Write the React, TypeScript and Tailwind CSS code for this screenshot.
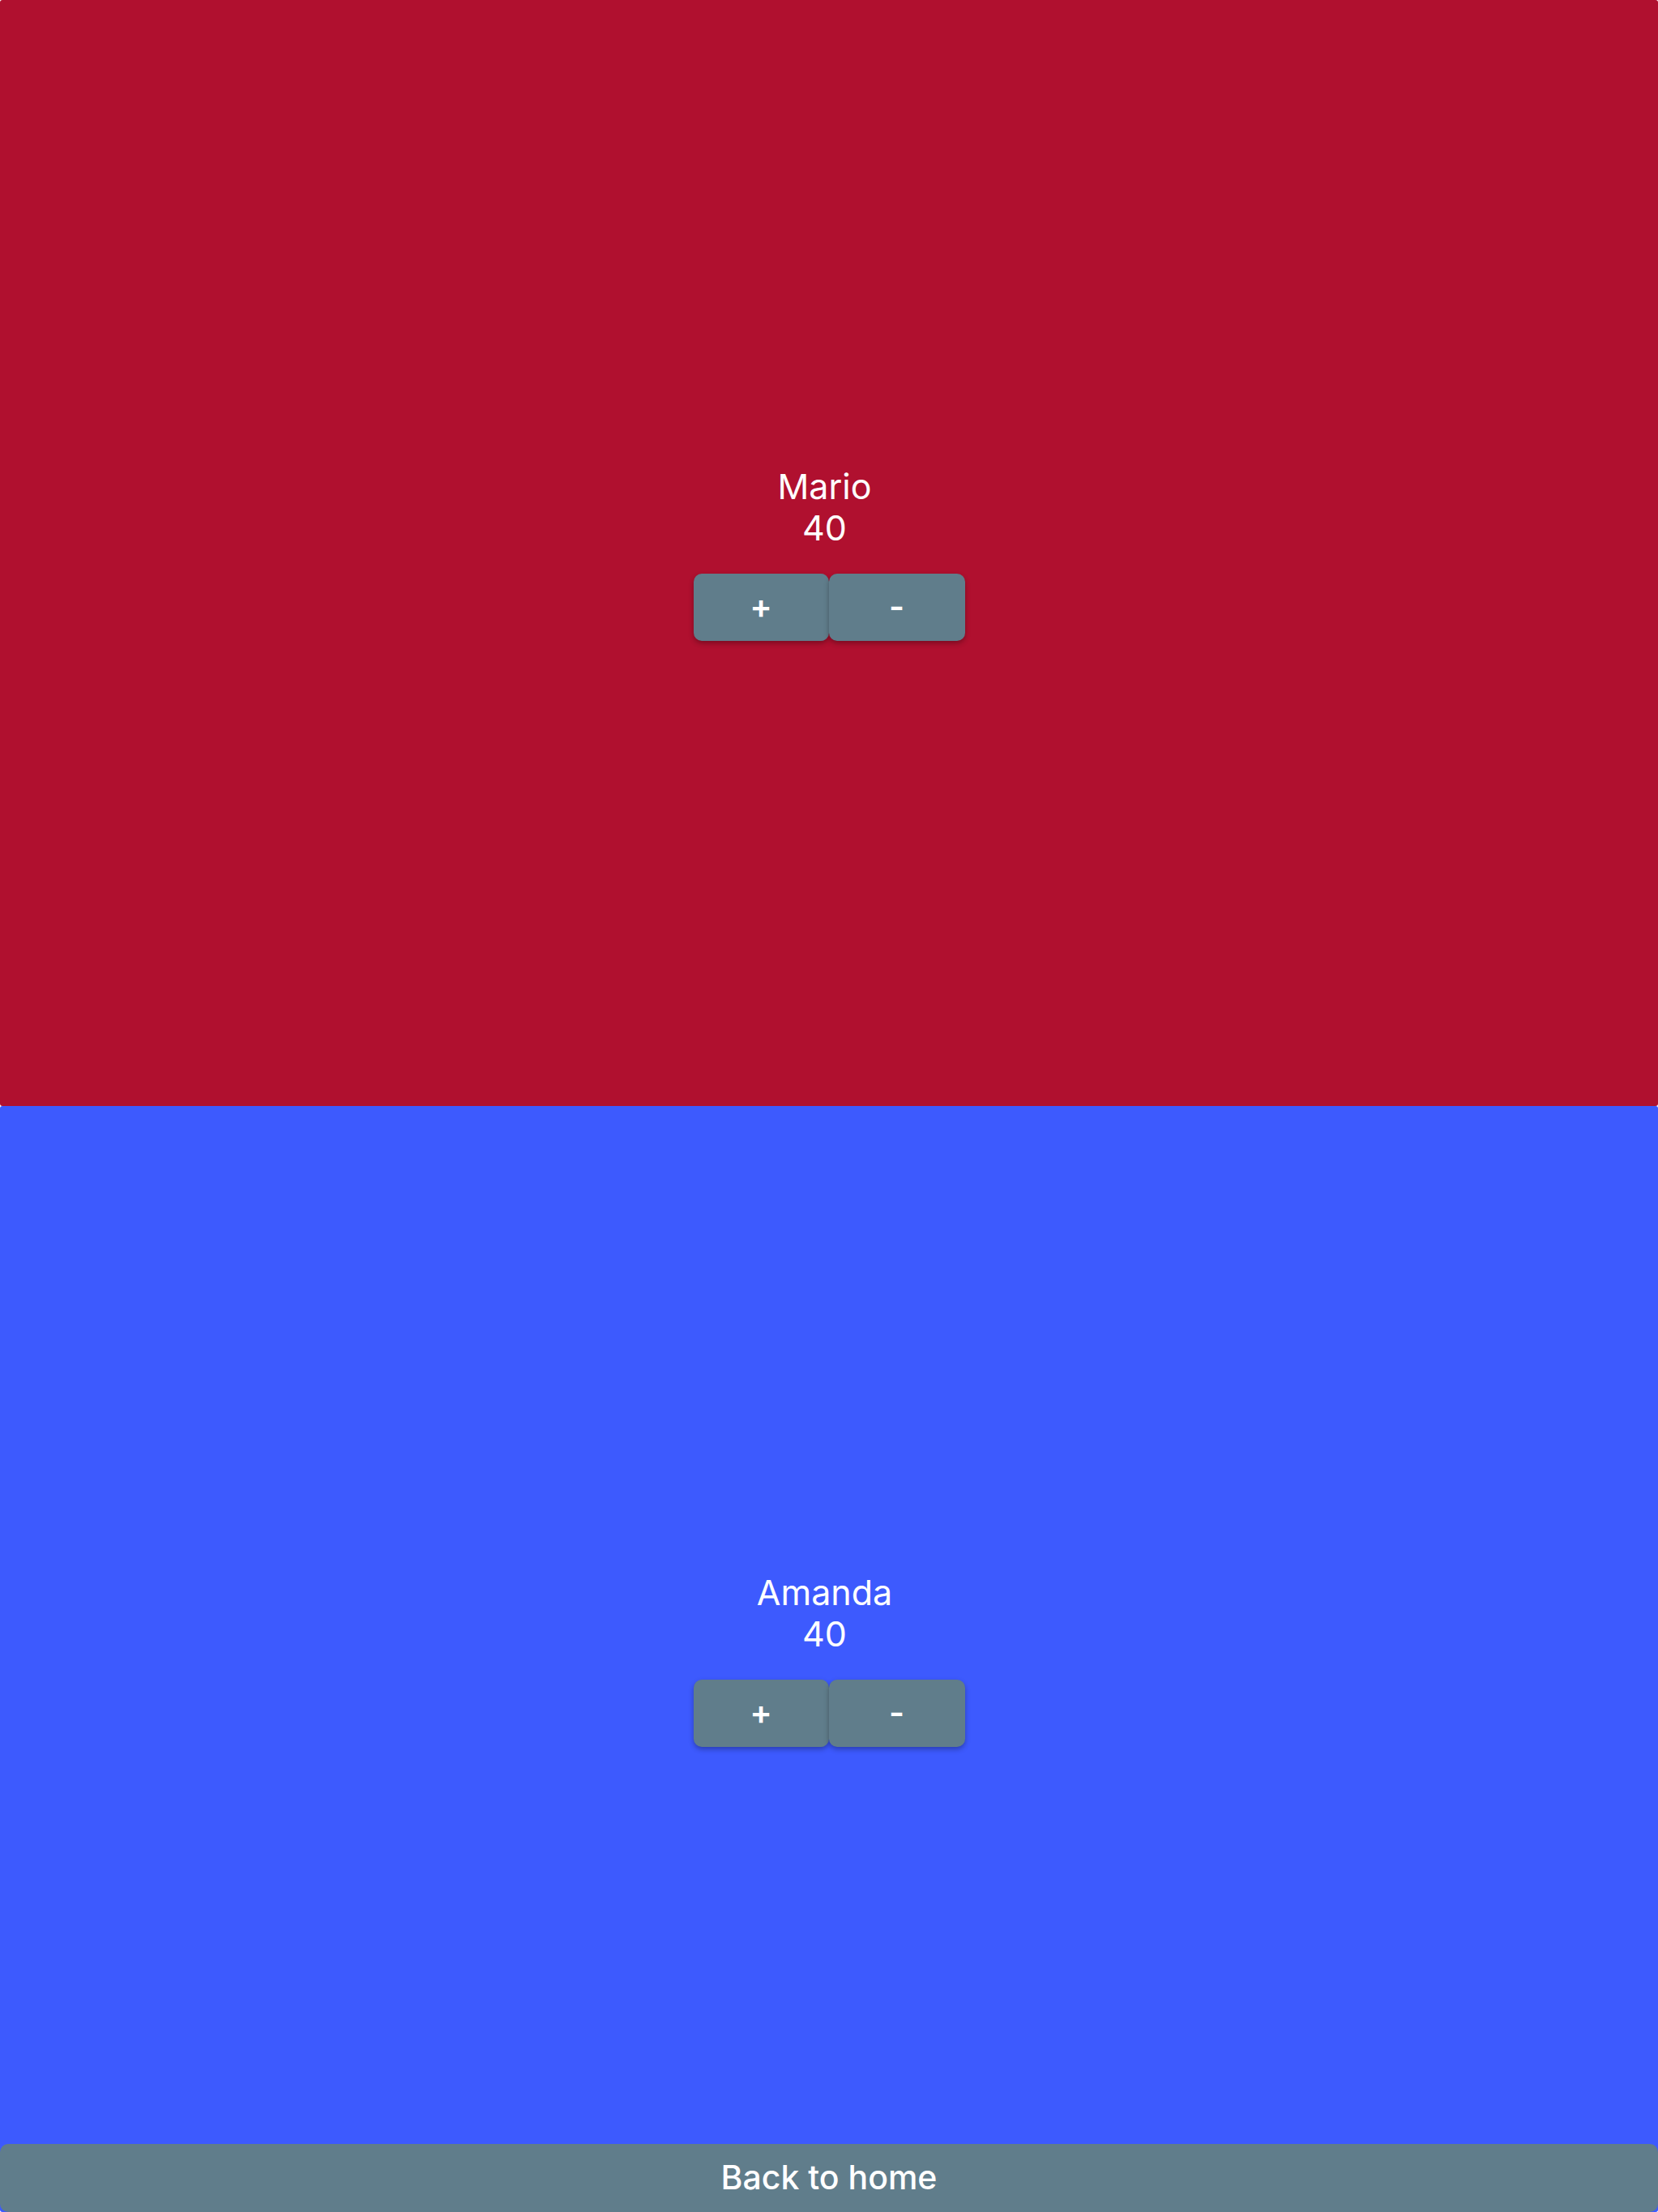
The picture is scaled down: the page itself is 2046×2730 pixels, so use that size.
import React from "react";

function Panel({ name, score, bg }: { name: string; score: number; bg: string }) {
  return (
    <div className={`h-[1365px] w-full rounded-[3px] flex flex-col items-center justify-center ${bg}`}>
      <div className="pr-[11px] flex flex-col items-center">
        <div className="text-white text-[43px] leading-[51px] text-center">{name}</div>
        <div className="text-white text-[43px] leading-[51px] text-center">{score}</div>
      </div>
      <div className="flex mt-[31px]">
        <button className="w-[167px] h-[83px] rounded-[10px] bg-[#607d8b] text-white text-[41px] font-semibold shadow-[0_3px_6px_rgba(0,0,0,0.3)] flex items-center justify-center">
          +
        </button>
        <button className="w-[168px] h-[83px] rounded-[10px] bg-[#607d8b] text-white text-[41px] font-semibold shadow-[0_3px_6px_rgba(0,0,0,0.3)] flex items-center justify-center">
          -
        </button>
      </div>
    </div>
  );
}

export default function App() {
  return (
    <div className="relative w-[2046px] h-[2730px] bg-white overflow-hidden" style={{ fontFamily: "Inter, 'Noto Sans', sans-serif" }}>
      <Panel name="Mario" score={40} bg="bg-[#b0102f]" />
      <Panel name="Amanda" score={40} bg="bg-[#3d5afe]" />
      <button className="absolute left-0 right-0 bottom-0 h-[84px] rounded-[10px] bg-[#607d8b] text-white text-[41px] font-medium flex items-center justify-center">
        Back to home
      </button>
    </div>
  );
}
